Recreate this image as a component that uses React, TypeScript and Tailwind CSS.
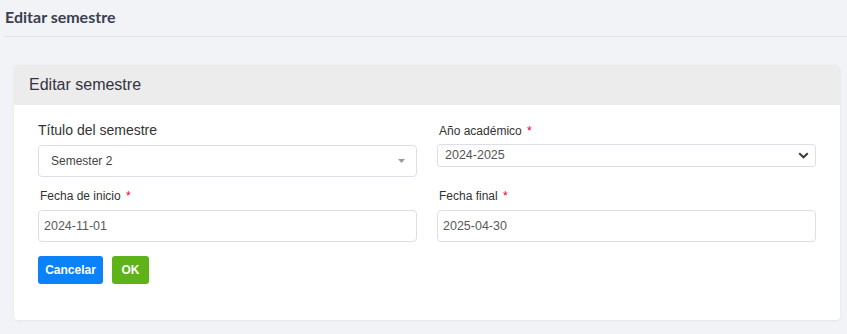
import React from "react";

export default function App() {
  return (
    <div className="min-h-[334px] w-full bg-[#f2f3f7] pt-0" style={{ fontFamily: '"Liberation Sans", Arial, sans-serif' }}>
      <div className="ml-[5px] h-[37px] border-b border-[#e1e2e7] flex items-start">
        <h1 className="pt-[7px] text-[16px] leading-[20px] font-bold text-[#3a3e50]" style={{ fontFamily: 'Lato, "Liberation Sans", sans-serif' }}>
          Editar semestre
        </h1>
      </div>
      <div className="ml-[14px] mr-[7px] mt-[28px] rounded-[4px] bg-white shadow-[0_1px_3px_rgba(0,0,0,0.06)] overflow-hidden">
        <div className="h-[40px] bg-[#ececec] pl-[15px] flex items-center">
          <span className="text-[16px] text-[#333340]">Editar semestre</span>
        </div>
        <div className="px-[24px] pt-[15px] pb-[36px]">
          <div className="grid grid-cols-2 gap-x-[20px]">
            <div className="flex flex-col">
              <label className="text-[14px] leading-[20px] text-[#333]">Título del semestre</label>
              <div className="mt-[5px] h-[32px] rounded-[4px] border border-[#dcdfe8] flex items-center justify-between pl-[12px] pr-[11px]">
                <span className="text-[12px] text-[#444]">Semester 2</span>
                <svg width="7" height="4" viewBox="0 0 7 4"><path d="M0 0 L7 0 L3.5 4 Z" fill="#9a9a9a" /></svg>
              </div>
            </div>
            <div className="flex flex-col">
              <label className="mt-[3px] pl-[2px] text-[12px] leading-[17px] text-[#333]">
                Año académico <span className="text-[#e0002a] ml-[2px]">*</span>
              </label>
              <div className="mt-[4px] h-[23px] rounded-[3px] border border-[#dcdfe8] flex items-center justify-between pl-[7px] pr-[6px]">
                <span className="text-[12.5px] text-[#555]">2024-2025</span>
                <svg width="11" height="7" viewBox="0 0 11 7"><path d="M1.2 1.2 L5.5 5.3 L9.8 1.2" fill="none" stroke="#3c3c3c" strokeWidth="2" /></svg>
              </div>
            </div>
            <div className="flex flex-col mt-[11px]">
              <label className="pl-[2px] text-[12px] leading-[17px] text-[#333]">
                Fecha de inicio <span className="text-[#e0002a] ml-[2px]">*</span>
              </label>
              <div className="mt-[5px] h-[32px] rounded-[4px] border border-[#dcdfe8] flex items-center pl-[5px]">
                <span className="text-[12.5px] text-[#5a5a5a]">2024-11-01</span>
              </div>
            </div>
            <div className="flex flex-col mt-[11px]">
              <label className="pl-[2px] text-[12px] leading-[17px] text-[#333]">
                Fecha final <span className="text-[#e0002a] ml-[2px]">*</span>
              </label>
              <div className="mt-[5px] h-[32px] rounded-[4px] border border-[#dcdfe8] flex items-center pl-[5px]">
                <span className="text-[12.5px] text-[#5a5a5a]">2025-04-30</span>
              </div>
            </div>
          </div>
          <div className="mt-[14px] flex gap-[9px]">
            <button className="h-[28px] w-[65px] rounded-[3px] bg-[#0b82fa] text-white text-[12px] font-bold">Cancelar</button>
            <button className="h-[28px] w-[37px] rounded-[3px] bg-[#5db317] text-white text-[12px] font-bold">OK</button>
          </div>
        </div>
      </div>
    </div>
  );
}
